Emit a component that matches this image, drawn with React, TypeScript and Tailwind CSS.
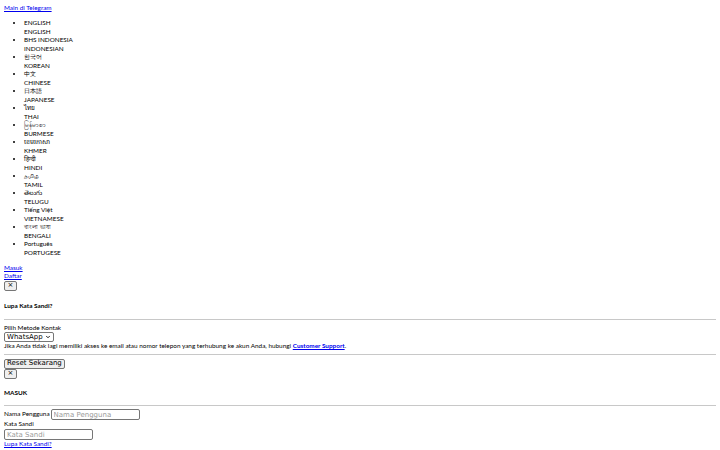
import { ChevronDown } from "lucide-react";

const languages = [
  { native: "ENGLISH", name: "ENGLISH" },
  { native: "BHS INDONESIA", name: "INDONESIAN" },
  { native: "한국어", name: "KOREAN" },
  { native: "中文", name: "CHINESE" },
  { native: "日本語", name: "JAPANESE" },
  { native: "ไทย", name: "THAI" },
  { native: "မြန်မာစာ", name: "BURMESE" },
  { native: "ខេមរភាសា", name: "KHMER" },
  { native: "हिन्दी", name: "HINDI" },
  { native: "தமிழ்", name: "TAMIL" },
  { native: "తెలుగు", name: "TELUGU" },
  { native: "Tiếng Việt", name: "VIETNAMESE" },
  { native: "বাংলা ভাষা", name: "BENGALI" },
  { native: "Português", name: "PORTUGESE" },
];

const link = "text-[#0000ee] underline";
const control = "font-['DejaVu_Sans',sans-serif] text-[7px] leading-none text-black";

function CloseButton() {
  return (
    <button className={`${control} flex h-[10px] w-[13px] items-center justify-center rounded-[2px] border border-[#767676] bg-[#efefef]`}>
      ×
    </button>
  );
}

export default function App() {
  return (
    <div className="min-h-[450px] bg-white px-[4px] pt-[4px] font-['Lato',sans-serif] text-[6.4px] leading-[8.5px] text-black">
      <a href="#" className={link}>Main di Telegram</a>

      {/* language menu */}
      <ul className="mt-[6.5px] mb-[6.5px] list-disc pl-[20px]">
        {languages.map((lang) => (
          <li key={lang.name}>
            <div>{lang.native}</div>
            <div>{lang.name}</div>
          </li>
        ))}
      </ul>

      <div>
        <a href="#" className={link}>Masuk</a>
      </div>
      <div>
        <a href="#" className={link}>Daftar</a>
      </div>

      {/* forgot password modal */}
      <CloseButton />
      <h5 className="mt-[11px] mb-[9px] font-bold">Lupa Kata Sandi?</h5>
      <hr className="border-t border-[#c8c8c8]" />
      <div className="mt-[3.5px]">Pilih Metode Kontak</div>
      <div className="inline-flex h-[10px] items-center gap-[2px] rounded-[2px] border border-[#767676] bg-white px-[2px]">
        <span className={`${control} text-[7.5px]`}>WhatsApp</span>
        <ChevronDown className="h-[6px] w-[6px]" strokeWidth={3.5} />
      </div>
      <p>
        Jika Anda tidak lagi memiliki akses ke email atau nomor telepon yang terhubung ke akun Anda, hubungi{" "}
        <a href="#" className={`${link} font-bold`}>Customer Support</a>.
      </p>
      <hr className="mt-[3.5px] mb-[3.5px] border-t border-[#c8c8c8]" />
      <button className={`${control} flex h-[10px] items-center rounded-[2px] border border-[#767676] bg-[#efefef] px-[2px] text-[6.8px]`}>
        Reset Sekarang
      </button>
      <CloseButton />

      {/* login modal */}
      <h5 className="mt-[10px] mb-[8px] font-bold">MASUK</h5>
      <hr className="mb-[3px] border-t border-[#c8c8c8]" />
      <div className="flex items-center gap-[1px]">
        <span>Nama Pengguna</span>
        <input
          placeholder="Nama Pengguna"
          className={`${control} h-[11px] w-[89px] rounded-[2px] border border-[#767676] px-[2px] placeholder:text-[#9a9a9a]`}
        />
      </div>
      <div>Kata Sandi</div>
      <input
        placeholder="Kata Sandi"
        className={`${control} mt-[0.5px] block h-[11px] w-[89px] rounded-[2px] border border-[#767676] px-[2px] placeholder:text-[#9a9a9a]`}
      />
      <a href="#" className={link}>Lupa Kata Sandi?</a>
    </div>
  );
}
